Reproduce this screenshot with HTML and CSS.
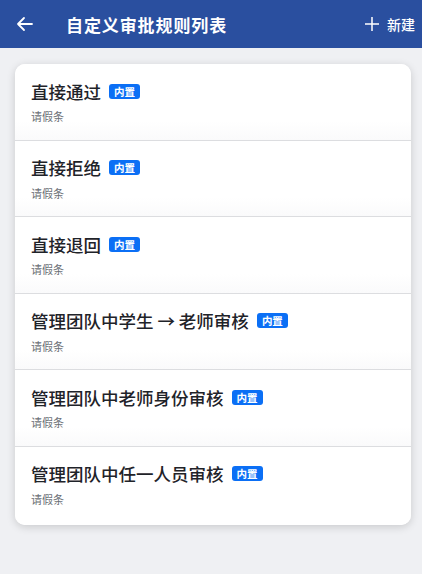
FILE: index.html
```html
<!DOCTYPE html>
<html lang="zh-CN">
<head>
	<meta charset="UTF-8"/>
	<meta name="viewport" content="width=device-width, initial-scale=1"/>
	<title>自定义审批规则列表</title>
	<link rel="stylesheet" href="styles.css">
</head>
<body>

<header class="topbar">
	<button class="icon-btn back" aria-label="返回">
		<svg width="20" height="20" viewBox="0 0 20 20" fill="none" stroke="currentColor" stroke-width="1.8" stroke-linecap="round" stroke-linejoin="round">
			<path d="M17 10H3M9 4l-6 6 6 6"/>
		</svg>
	</button>
	<h1 class="title">自定义审批规则列表</h1>
	<button class="icon-btn add">
		<svg width="14" height="14" viewBox="0 0 14 14" fill="none" stroke="currentColor" stroke-width="1.5">
			<path d="M7 0v14M0 7h14"/>
		</svg>
		<span>新建</span>
	</button>
</header>

<main class="content">
	<ul class="rule-list">
		<li class="rule">
			<div class="rule-head"><span class="rule-name">直接通过</span><span class="tag">内置</span></div>
			<div class="rule-type">请假条</div>
		</li>
		<li class="rule">
			<div class="rule-head"><span class="rule-name">直接拒绝</span><span class="tag">内置</span></div>
			<div class="rule-type">请假条</div>
		</li>
		<li class="rule">
			<div class="rule-head"><span class="rule-name">直接退回</span><span class="tag">内置</span></div>
			<div class="rule-type">请假条</div>
		</li>
		<li class="rule">
			<div class="rule-head"><span class="rule-name">管理团队中学生 → 老师审核</span><span class="tag">内置</span></div>
			<div class="rule-type">请假条</div>
		</li>
		<li class="rule">
			<div class="rule-head"><span class="rule-name">管理团队中老师身份审核</span><span class="tag">内置</span></div>
			<div class="rule-type">请假条</div>
		</li>
		<li class="rule">
			<div class="rule-head"><span class="rule-name">管理团队中任一人员审核</span><span class="tag">内置</span></div>
			<div class="rule-type">请假条</div>
		</li>
	</ul>
</main>

</body>
</html>
```

FILE: styles.css
```css
body {
    margin: 0;
    background-color: #eff0f3;
    font-family: "Noto Sans CJK SC", "Noto Sans", sans-serif;
    color: #1f2329;
    min-height: 574px;
}

.topbar {
    height: 48px;
    background-color: #2a4f9f;
    color: #fff;
    display: flex;
    align-items: center;
    padding: 0 7px 0 15px;
}

.icon-btn {
    background: none;
    border: none;
    color: #fff;
    padding: 0;
    display: flex;
    align-items: center;
    cursor: pointer;
    font-family: inherit;
}

.back {
    width: 20px;
    margin-right: 31px;
}

.title {
    flex: 1;
    margin: 0;
    font-size: 17px;
    font-weight: 700;
    letter-spacing: 0.9px;
}

.add {
    gap: 8px;
    font-size: 14px;
    font-weight: 500;
}

.content {
    padding: 16px 11px 16px 15px;
}

.rule-list {
    list-style: none;
    margin: 0;
    padding: 0;
    background: #fff;
    border-radius: 10px;
    overflow: hidden;
    box-shadow: 0 2px 8px rgba(0, 0, 0, 0.16);
}

.rule {
    height: 76.5px;
    box-sizing: border-box;
    padding: 14px 16px 0;
    border-bottom: 1px solid #dcdde0;
    background: linear-gradient(to bottom, #fff 75%, #fafafb);
}

.rule:last-child {
    height: 78px;
    border-bottom: none;
    background: #fff;
}

.rule-head {
    display: flex;
    align-items: center;
    gap: 8px;
    height: 26px;
}

.rule-name {
    font-size: 17.5px;
    font-weight: 500;
}

.tag {
    background-color: #0b6ff5;
    color: #fff;
    font-size: 10.5px;
    font-weight: 700;
    line-height: 15px;
    padding: 0 5px;
    border-radius: 3px;
}

.rule-type {
    margin-top: 4px;
    font-size: 11px;
    color: #6b6f76;
}
```
